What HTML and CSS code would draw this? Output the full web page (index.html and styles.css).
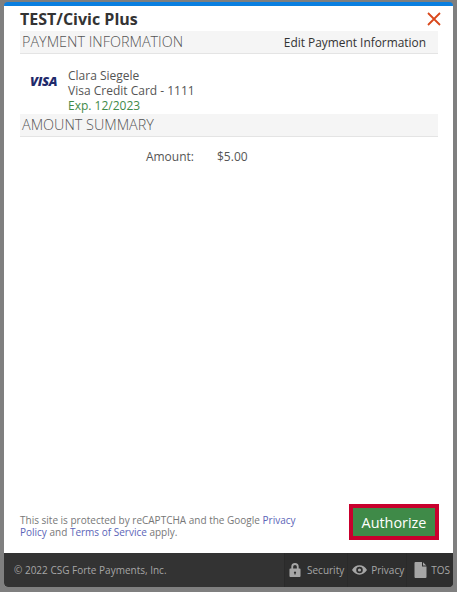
FILE: index.html
```html
<!DOCTYPE html>
<html lang="en">

<head>
    <meta charset="UTF-8">
    <meta name="viewport" content="width=device-width, initial-scale=1.0">
    <title>Authorize Payment</title>
    <link rel="stylesheet" href="styles.css">
</head>

<body>
    <div class="modal">
        <div class="content">
            <div class="title-row">
                <h1>TEST/Civic Plus</h1>
                <svg class="close" width="14" height="14" viewBox="0 0 14 14">
                    <path d="M1 1L13 13M13 1L1 13" stroke="#d9481c" stroke-width="1.8" fill="none"/>
                </svg>
            </div>
            <div class="section-head">
                <span>PAYMENT INFORMATION</span>
                <a class="edit">Edit Payment Information</a>
            </div>
            <div class="card">
                <div class="visa">VISA</div>
                <div class="card-text">
                    <div>Clara Siegele</div>
                    <div>Visa Credit Card - 1111</div>
                    <div class="exp">Exp. 12/2023</div>
                </div>
            </div>
            <div class="section-head">
                <span>AMOUNT SUMMARY</span>
            </div>
            <div class="amount">
                <span class="amount-label">Amount:</span>
                <span>$5.00</span>
            </div>
            <div class="bottom">
                <p class="captcha">This site is protected by reCAPTCHA and the Google <a>Privacy Policy</a> and <a>Terms of Service</a> apply.</p>
                <button class="authorize">Authorize</button>
            </div>
        </div>
        <div class="footer">
            <span class="copy">© 2022 CSG Forte Payments, Inc.</span>
            <div class="links">
                <div class="link link-security">
                    <svg width="12" height="16" viewBox="0 0 13 16"><path fill="#a6a6a6" fill-rule="evenodd" d="M2.500 6.500V4.500a4 4 0 0 1 8 0v2h1a1 1 0 0 1 1 1v7a1 1 0 0 1-1 1h-10a1 1 0 0 1-1-1v-7a1 1 0 0 1 1-1zM4.500 6.500h4v-2a2 2 0 0 0-4 0zM6.500 9.500a1.300 1.300 0 0 0-.6 2.400V13h1.200v-1.100a1.300 1.300 0 0 0-.6-2.400z"/></svg>
                    <span>Security</span>
                </div>
                <div class="link link-privacy">
                    <svg width="15" height="10" viewBox="0 0 16 10"><path fill="#a6a6a6" fill-rule="evenodd" d="M8 0c3.500 0 6.300 2.200 8 5-1.700 2.800-4.500 5-8 5S1.700 7.800 0 5c1.700-2.800 4.500-5 8-5zM8 1.500a3.500 3.500 0 1 0 0 7 3.500 3.500 0 0 0 0-7zM8 3.300a1.700 1.700 0 1 1 0 3.400 1.700 1.700 0 0 1 0-3.400z"/></svg>
                    <span>Privacy</span>
                </div>
                <div class="link link-tos">
                    <svg width="13" height="16" viewBox="0 0 12 16"><path fill="#a6a6a6" d="M1 0h6.500v4.500H12V15a1 1 0 0 1-1 1H1a1 1 0 0 1-1-1V1a1 1 0 0 1 1-1zM8.500 0.300L11.800 3.500H8.500z"/></svg>
                    <span>TOS</span>
                </div>
            </div>
        </div>
    </div>
</body>

</html>
```

FILE: styles.css
```css
*{
    box-sizing: border-box;
}
html,body{
    margin:0;
    height:100%;
}
body{
    background:#7f7f7f;
    padding:2px 4px 5px 4px;
    font-family:"Open Sans", "Liberation Sans", sans-serif;
    font-size:12px;
    color:#555;
}
.modal{
    height:585px;
    display:flex;
    flex-direction:column;
    background:white;
    border-top:4px solid #0a7fe0;
    border-radius:4px;
    overflow:hidden;
}
.content{
    flex:1;
    display:flex;
    flex-direction:column;
    padding:0 15px 0 16px;
}
.title-row{
    height:25px;
    display:flex;
    justify-content:space-between;
    align-items:center;
}
h1{
    margin:0;
    font-size:16px;
    font-weight:700;
    color:#333;
}
.close{
    margin-right:-3px;
    margin-top:1px;
}
.section-head{
    height:23px;
    padding:0 12px 1px 2px;
    display:flex;
    justify-content:space-between;
    align-items:center;
    background:#f5f5f5;
    border-bottom:1px solid #e4e4e4;
    font-size:14.4px;
    font-weight:300;
    color:#555;
}
.edit{
    font-size:11.9px;
    font-weight:400;
    color:#333;
}
.card{
    height:60px;
    display:flex;
    align-items:flex-start;
    padding-top:14px;
    line-height:15px;
}
.visa{
    width:48px;
    padding:0 0 0 10px;
    margin-top:6px;
    font-size:13px;
    font-weight:800;
    font-style:italic;
    color:#1f2a6b;
    letter-spacing:-0.3px;
}
.exp{
    color:#3f8a48;
}
.amount{
    display:flex;
    padding-top:11px;
    line-height:17px;
}
.amount-label{
    width:174px;
    margin-right:23px;
    text-align:right;
}
.bottom{
    margin-top:auto;
    height:49px;
    display:flex;
    justify-content:space-between;
    align-items:flex-start;
}
.captcha{
    margin:10px 0 0 0;
    width:290px;
    font-size:10px;
    line-height:12px;
    color:#777;
}
.captcha a{
    color:#5b64b8;
}
.authorize{
    width:90px;
    height:36px;
    margin-right:-1px;
    background:#3f8a48;
    border:4px solid #c8002d;
    color:white;
    font-family:inherit;
    font-size:14.4px;
    padding:0;
}
.footer{
    height:34px;
    display:flex;
    justify-content:space-between;
    align-items:center;
    background:#333;
    padding-left:10px;
    font-size:10px;
    color:#a6a6a6;
}
.links{
    display:flex;
    align-self:stretch;
    background:#2e2e2e;
    border-radius:4px 0 0 0;
}
.link{
    display:flex;
    align-items:center;
    border-left:1px solid #2a2a2a;
}
.link-security{
    gap:6px;
    padding:0 3px 0 4px;
}
.link-privacy{
    gap:4px;
    padding:0 2px 0 4px;
}
.link-tos{
    gap:4px;
    padding:0 3px 0 7px;
}
```
